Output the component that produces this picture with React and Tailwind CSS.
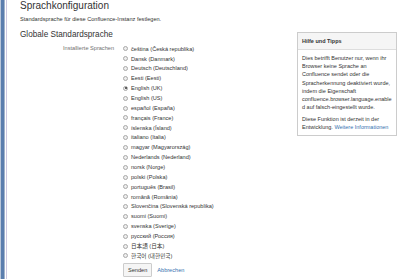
import React, { useState } from "react";

const languages = [
  "čeština (Česká republika)",
  "Dansk (Danmark)",
  "Deutsch (Deutschland)",
  "Eesti (Eesti)",
  "English (UK)",
  "English (US)",
  "español (España)",
  "français (France)",
  "íslenska (Ísland)",
  "italiano (Italia)",
  "magyar (Magyarország)",
  "Nederlands (Nederland)",
  "norsk (Norge)",
  "polski (Polska)",
  "português (Brasil)",
  "română (România)",
  "Slovenčina (Slovenská republika)",
  "suomi (Suomi)",
  "svenska (Sverige)",
  "русский (Россия)",
  "日本語 (日本)",
  "한국어 (대한민국)",
];

const Radio = ({ checked }) => (
  <span className="flex h-[5px] w-[5px] shrink-0 items-center justify-center rounded-full border-[0.5px] border-[#a9a9a9] bg-[#eeeeee]">
    {checked && <span className="h-[2px] w-[2px] rounded-full bg-[#333]" />}
  </span>
);

const App = () => {
  const [selected, setSelected] = useState("English (UK)");

  return (
    <div
      className="flex h-[279px] w-[404px] overflow-hidden bg-white text-[#333]"
      style={{ fontFamily: '"Liberation Sans", "Noto Sans CJK KR", "Noto Sans CJK JP", sans-serif' }}
    >
      {/* left edge of the window */}
      <div className="flex shrink-0">
        <div className="w-px bg-[#b9c6da]" />
        <div className="w-[3px] bg-[#5a7eae]" />
        <div className="w-px bg-[#a3b3cb]" />
        <div className="w-px bg-white" />
        <div className="w-px bg-[#cdc9e2]" />
      </div>

      <main className="flex-1 pl-[13px]">
        <h1 className="text-[10px] leading-[12px]">Sprachkonfiguration</h1>
        <p className="mt-[3px] text-[5.6px] leading-[8px]">
          Standardsprache für diese Confluence-Instanz festlegen.
        </p>

        <div className="flex">
          <div className="flex-1">
            <h2 className="mt-[7px] text-[8.2px] leading-[10px]">Globale Standardsprache</h2>
            <div className="mt-[4px] flex">
              <div className="w-[95px] pr-px text-right text-[5.6px] leading-[9.86px] text-[#707070]">
                Installierte Sprachen
              </div>
              <div className="pl-[8px]">
                {languages.map((lang) => (
                  <label
                    key={lang}
                    onClick={() => setSelected(lang)}
                    className="flex h-[9.86px] cursor-pointer items-center gap-[3px] whitespace-nowrap text-[5.6px]"
                  >
                    <Radio checked={selected === lang} />
                    <span>{lang}</span>
                  </label>
                ))}
                <div className="mt-[2px] flex items-center gap-[5px] text-[5.6px]">
                  <button className="h-[14px] rounded-[1px] border-[0.5px] border-[#ccc] bg-[#f5f5f5] px-[4px] text-[#333]">
                    Senden
                  </button>
                  <a href="#" className="text-[#3572b0]">Abbrechen</a>
                </div>
              </div>
            </div>
          </div>

          <aside className="mr-[7px] mt-[9px] h-fit w-[100px] border-[0.5px] border-[#ccc] text-[5.5px] leading-[8.2px]">
            <div className="flex h-[17px] items-center border-b-[0.5px] border-[#ddd] bg-[#f5f5f5] px-[4px] font-bold">
              Hilfe und Tipps
            </div>
            <div className="whitespace-nowrap px-[4px] pb-[3.5px] pt-[4px]">
              <p>
                Dies betrifft Benutzer nur, wenn ihr
                <br />
                Browser keine Sprache an
                <br />
                Confluence sendet oder die
                <br />
                Spracherkennung deaktiviert wurde,
                <br />
                indem die Eigenschaft
                <br />
                confluence.browser.language.enable
                <br />
                d auf falsch-eingestellt wurde.
              </p>
              <p className="mt-[3.5px]">
                Diese Funktion ist derzeit in der
                <br />
                Entwicklung. <a href="#" className="text-[#3572b0]">Weitere Informationen</a>
              </p>
            </div>
          </aside>
        </div>
      </main>
    </div>
  );
};

export default App;
